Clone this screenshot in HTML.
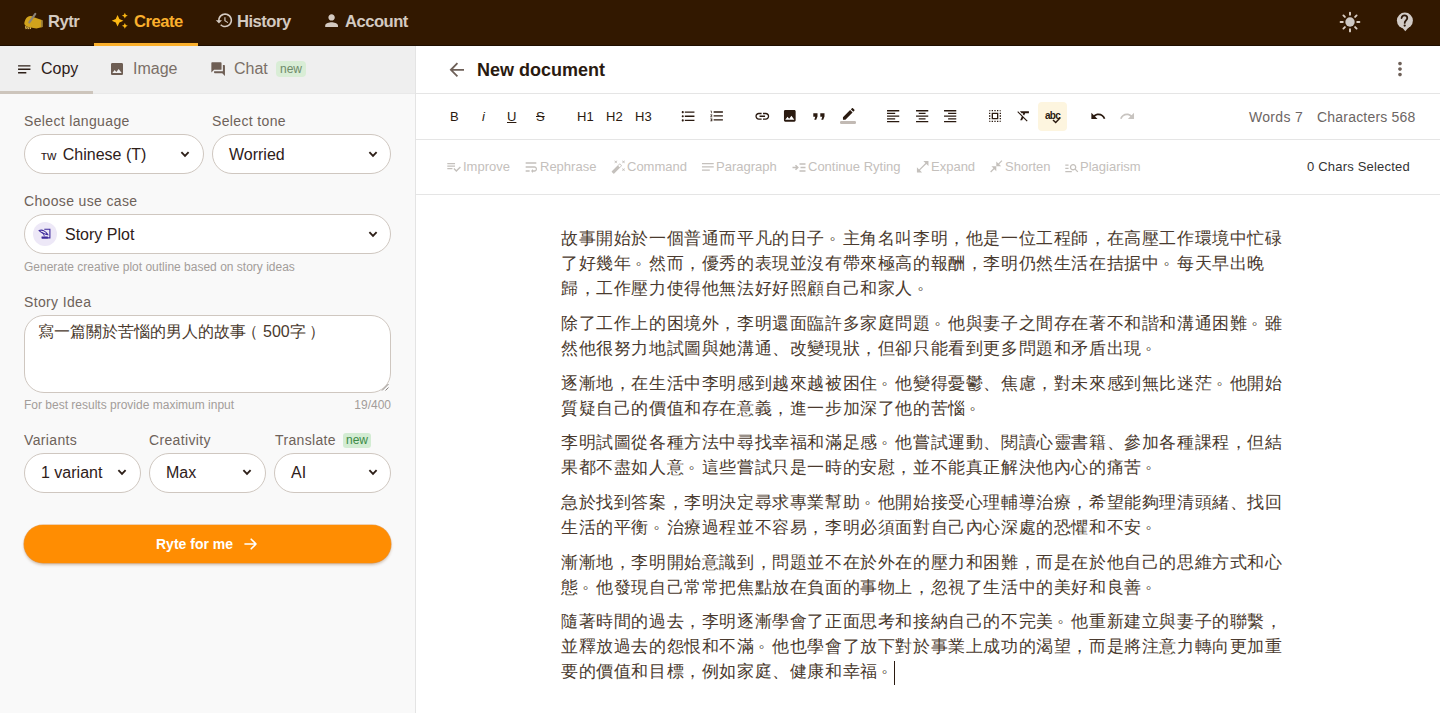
<!DOCTYPE html>
<html><head><meta charset="utf-8">
<style>
*{box-sizing:border-box;margin:0;padding:0}
html,body{width:1440px;height:713px;overflow:hidden;background:#fff;font-family:"Liberation Sans",sans-serif}
.a{position:absolute;white-space:nowrap}
svg{position:absolute;display:block;overflow:visible}
.nt{font-weight:bold;font-size:16.6px;letter-spacing:-0.5px;color:#d4cac1;line-height:16px}
.lbl{font-size:14px;color:#6e625a;line-height:14px;letter-spacing:0.35px}
.sel{position:absolute;height:40px;border:1px solid #cfc7c0;border-radius:20px;background:#fff}
.st{font-size:16px;color:#2e2019;line-height:16px}
.help{font-size:12px;color:#a39d99;line-height:12px}
.hl{position:absolute;left:416px;width:1024px;height:1px;background:#e5e5e5}
.tb{font-size:13px;color:#2a1a10;line-height:13px}
.ai{font-size:13px;color:#c4c0bc;line-height:13px}
#doc{position:absolute;left:561px;top:226.3px;font-size:17px;letter-spacing:0.6px;color:#4a3a2e;line-height:25px;white-space:nowrap}
#doc p{margin-bottom:9.7px}
#doc i{font-style:normal;position:relative;left:3.5px;top:-5px}
</style></head><body>
<!-- NAV -->
<div class="a" style="left:0;top:0;width:1440px;height:46px;background:#321800;border-bottom:1px solid #1f0e00"></div>
<svg style="left:24px;top:12px" width="20" height="18" viewBox="0 0 20 18">
  <path d="M0.3 11.3 C0.8 8.5 1.8 6 3.5 5 C5 4 6.5 3.8 8 4.3 L10.6 5.6 L17.9 7.9 L18.6 8.4 L18.6 15 L12.4 16.4 L8 15.7 L2.5 14.5 C1.2 13.6 0.4 12.6 0.3 11.3Z" fill="#d2a31c"/>
  <path d="M1.5 14.2 L2.3 17 M3.8 14.8 L4.4 17.1 M6 15.3 L6.5 17" stroke="#e3c15e" stroke-width="1.3"/>
  <path d="M17.2 8 L18.6 8.4 L18.6 15 L17.2 15.3Z" fill="#8f7a44"/>
  <path d="M5.3 10.4 L11.3 1.8" stroke="#8a8278" stroke-width="2.1" stroke-linecap="round"/>
</svg>
<div class="a nt" style="left:48px;top:14px">Rytr</div>
<svg style="left:111px;top:12px" width="17.5" height="17.5" viewBox="0 0 24 24"><path fill="#fdb813" d="M19 9l1.25-2.75L23 5l-2.75-1.25L19 1l-1.25 2.75L15 5l2.75 1.25L19 9zm-7.5.5L9 4 6.5 9.5 1 12l5.5 2.5L9 20l2.5-5.5L17 12l-5.5-2.5zM19 15l-1.25 2.75L15 19l2.75 1.25L19 23l1.25-2.75L23 19l-2.75-1.25L19 15z"/></svg>
<div class="a nt" style="left:134px;top:14px;color:#fbb02c">Create</div>
<div class="a" style="left:94px;top:43px;width:104px;height:3px;background:#fbb02c"></div>
<svg style="left:214.5px;top:10.8px" width="18.7" height="18.7" viewBox="0 0 24 24"><path fill="#d4cac1" d="M13 3c-4.97 0-9 4.03-9 9H1l3.89 3.89.07.14L9 12H6c0-3.87 3.13-7 7-7s7 3.13 7 7-3.13 7-7 7c-1.93 0-3.68-.79-4.94-2.06l-1.42 1.42C8.27 19.99 10.51 21 13 21c4.97 0 9-4.03 9-9s-4.03-9-9-9zm-1 5v5l4.28 2.54.72-1.21-3.5-2.08V8H12z"/></svg>
<div class="a nt" style="left:237px;top:14px">History</div>
<svg style="left:321.8px;top:11.1px" width="19.2" height="19.2" viewBox="0 0 24 24"><path fill="#d4cac1" d="M12 12c2.21 0 4-1.79 4-4s-1.79-4-4-4-4 1.79-4 4 1.79 4 4 4zm0 2c-2.67 0-8 1.34-8 4v2h16v-2c0-2.66-5.33-4-8-4z"/></svg>
<div class="a nt" style="left:345px;top:14px">Account</div>
<svg style="left:1338px;top:10px" width="24" height="24" viewBox="0 0 24 24">
  <circle cx="12" cy="12" r="4.7" fill="#cfc9c4"/>
  <g stroke="#dccfc4" stroke-width="1.9" stroke-linecap="round">
    <path d="M12 2.6v2.2M12 19.2v2.2M2.6 12h2.2M19.2 12h2.2M5.4 5.4l1.5 1.5M17.1 17.1l1.5 1.5M5.4 18.6l1.5-1.5M17.1 6.9l1.5-1.5"/>
  </g>
</svg>
<svg style="left:1396px;top:12px" width="18" height="20" viewBox="0 0 18 20">
  <circle cx="8.9" cy="8.6" r="8" fill="#d2cbc6"/>
  <path d="M6 15.3L14.6 13.2L9.3 19.3Z" fill="#d2cbc6"/>
  <path d="M5.6 6C5.8 4.2 7 3.3 8.5 3.3C10.2 3.3 11.3 4.5 11.3 6.1C11.3 8.2 8.7 8.6 8.7 10.9" stroke="#2a1608" stroke-width="1.8" fill="none" stroke-linecap="round"/>
  <circle cx="8.7" cy="13.6" r="1.15" fill="#2a1608"/>
</svg>

<!-- LEFT PANEL -->
<div class="a" style="left:0;top:46px;width:416px;height:667px;background:#f9f9f9;border-right:1px solid #e4e4e4"></div>
<div class="a" style="left:0;top:46px;width:415px;height:48px;background:#efefef;border-bottom:1px solid #e9e9e9"></div>
<div class="a" style="left:0;top:91px;width:93px;height:3px;background:#cdc5bc"></div>
<svg style="left:15.9px;top:60.8px" width="16.5" height="16.5" viewBox="0 0 24 24"><path fill="#2e2019" d="M3 18h12v-2H3v2zM3 6v2h18V6H3zm0 7h18v-2H3v2z"/></svg>
<div class="a" style="left:41px;top:61px;font-size:16px;color:#2e2019;line-height:16px">Copy</div>
<svg style="left:109px;top:60.7px" width="16" height="16" viewBox="0 0 24 24"><path fill="#6e5e54" d="M21 19V5c0-1.1-.9-2-2-2H5c-1.1 0-2 .9-2 2v14c0 1.1.9 2 2 2h14c1.1 0 2-.9 2-2zM8.5 13.5l2.5 3.01L14.5 12l4.5 6H5l3.5-4.5z"/></svg>
<div class="a" style="left:133px;top:61px;font-size:16px;color:#7b6f67;line-height:16px">Image</div>
<svg style="left:209.6px;top:60.8px" width="16.3" height="16.3" viewBox="0 0 24 24"><path fill="#6e5e54" d="M21 6h-2v9H6v2c0 .55.45 1 1 1h11l4 4V7c0-.55-.45-1-1-1zm-4 6V3c0-.55-.45-1-1-1H3c-.55 0-1 .45-1 1v14l4-4h10c.55 0 1-.45 1-1z"/></svg>
<div class="a" style="left:234px;top:61px;font-size:16px;color:#7b6f67;line-height:16px">Chat</div>
<div class="a" style="left:276px;top:61px;width:30px;height:16px;border-radius:4px;background:#d9edd6;font-size:12px;line-height:16px;color:#6f8a6a;text-align:center">new</div>

<div class="a lbl" style="left:24px;top:114px">Select language</div>
<div class="a lbl" style="left:212px;top:114px">Select tone</div>
<div class="sel" style="left:24px;top:134px;width:180px"></div>
<div class="sel" style="left:212px;top:134px;width:179px"></div>
<div class="a st" style="left:41px;top:147px"><span style="font-size:13px;margin-right:2px">ᴛw</span> Chinese (T)</div>
<div class="a st" style="left:229px;top:147px">Worried</div>

<div class="a lbl" style="left:24px;top:194px">Choose use case</div>
<div class="sel" style="left:24px;top:214px;width:367px"></div>
<div class="a" style="left:33px;top:222px;width:24px;height:24px;border-radius:12px;background:#ede8f7"></div>
<svg style="left:38px;top:228px" width="13" height="12" viewBox="0 0 13 12">
  <path d="M6.3 1.3H11.9V9.9H4" stroke="#3e2a9c" stroke-width="1.1" fill="none"/>
  <path d="M1.2 2.6C4.2 1.2 8.2 3.4 9.7 6.6C6.4 5.9 3.2 4.8 1.2 2.6Z" stroke="#3e2a9c" stroke-width="1.1" fill="none"/>
  <path d="M4.5 4.3L6.5 8.3" stroke="#3e2a9c" stroke-width="0.8"/>
  <rect x="3.5" y="8.4" width="6.4" height="2.2" rx="0.4" fill="#3e2a9c"/>
</svg>
<div class="a st" style="left:65px;top:227px">Story Plot</div>
<div class="a help" style="left:24px;top:261px">Generate creative plot outline based on story ideas</div>

<div class="a lbl" style="left:24px;top:295px">Story Idea</div>
<div class="a" style="left:24px;top:315px;width:367px;height:78px;border:1px solid #cfc7c0;border-radius:20px;background:#fff"></div>
<div class="a" style="left:38px;top:322px;font-size:16px;line-height:20px;color:#4a3a2e">寫一篇關於苦惱的男人的故事<span style="display:inline-block;width:17px;text-align:left"><span style="position:relative;left:-4px">（</span></span>500字<span style="display:inline-block;width:22px;text-align:center">）</span></div>
<svg style="left:381px;top:383px" width="8" height="8" viewBox="0 0 8 8"><path d="M1 7.5L7.5 1M4.5 7.5L7.5 4.5" stroke="#8a8480" stroke-width="1"/></svg>
<div class="a help" style="left:24px;top:399px">For best results provide maximum input</div>
<div class="a help" style="left:291px;top:399px;width:100px;text-align:right">19/400</div>

<div class="a lbl" style="left:24px;top:433px">Variants</div>
<div class="a lbl" style="left:149px;top:433px">Creativity</div>
<div class="a lbl" style="left:275px;top:433px">Translate</div>
<div class="a" style="left:343px;top:433px;width:28px;height:15px;border-radius:3px;background:#d3ecd3;font-size:12px;line-height:15px;color:#3c8a46;text-align:center">new</div>
<div class="sel" style="left:24px;top:453px;width:117px"></div>
<div class="sel" style="left:149px;top:453px;width:117px"></div>
<div class="sel" style="left:274px;top:453px;width:117px"></div>
<div class="a st" style="left:41px;top:465px">1 variant</div>
<div class="a st" style="left:166px;top:465px">Max</div>
<div class="a st" style="left:291px;top:465px">AI</div>

<!-- chevrons -->
<svg style="left:175.5px;top:144.5px" width="18" height="18" viewBox="0 0 24 24"><path d="M7.2 9.6L12 14.4l4.8-4.8" stroke="#2e2019" stroke-width="2.5" fill="none"/></svg>
<svg style="left:363.5px;top:144.5px" width="18" height="18" viewBox="0 0 24 24"><path d="M7.2 9.6L12 14.4l4.8-4.8" stroke="#2e2019" stroke-width="2.5" fill="none"/></svg>
<svg style="left:364px;top:224.5px" width="18" height="18" viewBox="0 0 24 24"><path d="M7.2 9.6L12 14.4l4.8-4.8" stroke="#2e2019" stroke-width="2.5" fill="none"/></svg>
<svg style="left:113px;top:463px" width="18" height="18" viewBox="0 0 24 24"><path d="M7.2 9.6L12 14.4l4.8-4.8" stroke="#2e2019" stroke-width="2.5" fill="none"/></svg>
<svg style="left:238px;top:463px" width="18" height="18" viewBox="0 0 24 24"><path d="M7.2 9.6L12 14.4l4.8-4.8" stroke="#2e2019" stroke-width="2.5" fill="none"/></svg>
<svg style="left:363.5px;top:463px" width="18" height="18" viewBox="0 0 24 24"><path d="M7.2 9.6L12 14.4l4.8-4.8" stroke="#2e2019" stroke-width="2.5" fill="none"/></svg>

<div class="a" style="left:24px;top:525px;width:367px;height:38px;border-radius:19px;background:#ff8d02;box-shadow:0 0 0 0.6px rgba(220,120,20,.6),0 2px 3px rgba(120,60,0,.3)"></div>
<div class="a" style="left:156px;top:537px;font-size:14px;line-height:14px;font-weight:bold;color:#fff">Ryte for me</div>
<svg style="left:244px;top:538px" width="14" height="12" viewBox="0 0 14 12"><path d="M1 6h11M7.2 1.2L12 6l-4.8 4.8" stroke="#fff" stroke-width="1.6" fill="none" stroke-linecap="round" stroke-linejoin="round"/></svg>

<!-- RIGHT -->
<div class="hl" style="top:93px"></div>
<div class="hl" style="top:139px"></div>
<div class="hl" style="top:194px"></div>
<svg style="left:445.7px;top:58.6px" width="21.6" height="21.6" viewBox="0 0 24 24"><path fill="#6e6058" d="M20 11H7.83l5.59-5.59L12 4l-8 8 8 8 1.41-1.41L7.83 13H20v-2z"/></svg>
<div class="a" style="left:477px;top:61px;font-size:18px;line-height:18px;font-weight:bold;color:#2a1a10">New document</div>
<svg style="left:1388.8px;top:58.3px" width="22" height="22" viewBox="0 0 24 24"><path fill="#6e6058" d="M12 8c1.1 0 2-.9 2-2s-.9-2-2-2-2 .9-2 2 .9 2 2 2zm0 2c-1.1 0-2 .9-2 2s.9 2 2 2 2-.9 2-2-.9-2-2-2zm0 6c-1.1 0-2 .9-2 2s.9 2 2 2 2-.9 2-2-.9-2-2-2z"/></svg>

<div class="a tb" style="left:450px;top:110px">B</div>
<div class="a tb" style="left:482px;top:110px;font-style:italic">i</div>
<div class="a tb" style="left:507px;top:110px;text-decoration:underline">U</div>
<div class="a tb" style="left:536px;top:110px;text-decoration:line-through">S</div>
<div class="a tb" style="left:577px;top:110px">H1</div>
<div class="a tb" style="left:606px;top:110px">H2</div>
<div class="a tb" style="left:635px;top:110px">H3</div>
<svg style="left:679.8px;top:107.7px" width="16.5" height="16.5" viewBox="0 0 24 24"><path fill="#2a1a10" d="M4 10.5c-.83 0-1.5.67-1.5 1.5s.67 1.5 1.5 1.5 1.5-.67 1.5-1.5-.67-1.5-1.5-1.5zm0-6c-.83 0-1.5.67-1.5 1.5S3.17 7.5 4 7.5 5.5 6.83 5.5 6 4.83 4.5 4 4.5zm0 12c-.83 0-1.5.68-1.5 1.5s.68 1.5 1.5 1.5 1.5-.68 1.5-1.5-.67-1.5-1.5-1.5zM7 19h14v-2H7v2zm0-6h14v-2H7v2zm0-8v2h14V5H7z"/></svg>
<svg style="left:709.1px;top:107.9px" width="15.9" height="15.9" viewBox="0 0 24 24"><path fill="#2a1a10" d="M2 17h2v.5H3v1h1v.5H2v1h3v-4H2v1zm1-9h1V4H2v1h1v3zm-1 3h1.8L2 13.1v.9h3v-1H3.2L5 10.9V10H2v1zm5-6v2h14V5H7zm0 14h14v-2H7v2zm0-6h14v-2H7v2z"/></svg>
<svg style="left:753.6px;top:107.7px" width="16.6" height="16.6" viewBox="0 0 24 24"><path fill="#2a1a10" d="M3.9 12c0-1.71 1.39-3.1 3.1-3.1h4V7H7c-2.76 0-5 2.24-5 5s2.24 5 5 5h4v-1.9H7c-1.71 0-3.1-1.39-3.1-3.1zM8 13h8v-2H8v2zm9-6h-4v1.9h4c1.71 0 3.1 1.39 3.1 3.1s-1.39 3.1-3.1 3.1h-4V17h4c2.76 0 5-2.24 5-5s-2.24-5-5-5z"/></svg>
<svg style="left:782px;top:108.3px" width="15.6" height="15.6" viewBox="0 0 24 24"><path fill="#2a1a10" d="M21 19V5c0-1.1-.9-2-2-2H5c-1.1 0-2 .9-2 2v14c0 1.1.9 2 2 2h14c1.1 0 2-.9 2-2zM8.5 13.5l2.5 3.01L14.5 12l4.5 6H5l3.5-4.5z"/></svg>
<svg style="left:813px;top:112.5px" width="12.5" height="7" viewBox="0 0 12.5 7"><path fill="#2a1a10" d="M0.3 0.3h4.2v3.2L3.2 6.7H1.3l1-3H0.3zM7.3 0.3h4.2v3.2L10.2 6.7H8.3l1-3H7.3z"/></svg>
<svg style="left:840.5px;top:105.9px" width="15.6" height="15.6" viewBox="0 0 24 24"><path fill="#2a1a10" d="M3 17.25V21h3.75L17.81 9.94l-3.75-3.75L3 17.25zM20.71 7.04c.39-.39.39-1.02 0-1.41l-2.34-2.34c-.39-.39-1.02-.39-1.41 0l-1.83 1.83 3.75 3.75 1.83-1.83z"/></svg>
<div class="a" style="left:840px;top:121px;width:16px;height:2.6px;border-radius:1.3px;background:#c2bab4"></div>
<svg style="left:884.9px;top:107.6px" width="16.3" height="16.3" viewBox="0 0 24 24"><path fill="#2a1a10" d="M15 15H3v2h12v-2zm0-8H3v2h12V7zM3 13h18v-2H3v2zm0 8h18v-2H3v2zM3 3v2h18V3H3z"/></svg>
<svg style="left:914px;top:107.6px" width="16.3" height="16.3" viewBox="0 0 24 24"><path fill="#2a1a10" d="M7 15v2h10v-2H7zm-4 6h18v-2H3v2zm0-8h18v-2H3v2zm4-6v2h10V7H7zM3 3v2h18V3H3z"/></svg>
<svg style="left:942.2px;top:107.6px" width="16.3" height="16.3" viewBox="0 0 24 24"><path fill="#2a1a10" d="M3 21h18v-2H3v2zm6-4h12v-2H9v2zm-6-4h18v-2H3v2zm6-4h12V7H9v2zM3 3v2h18V3H3z"/></svg>
<svg style="left:987px;top:107.6px" width="16" height="16" viewBox="0 0 24 24"><path fill="#2a1a10" d="M3 5h2V3c-1.1 0-2 .9-2 2zm0 8h2v-2H3v2zm4 8h2v-2H7v2zM3 9h2V7H3v2zm10-6h-2v2h2V3zm6 0v2h2c0-1.1-.9-2-2-2zM5 21v-2H3c0 1.1.9 2 2 2zm-2-4h2v-2H3v2zM9 3H7v2h2V3zm2 18h2v-2h-2v2zm8-8h2v-2h-2v2zm0 8c1.1 0 2-.9 2-2h-2v2zm0-12h2V7h-2v2zm0 8h2v-2h-2v2zm-4 4h2v-2h-2v2zm0-16h2V3h-2v2zM7 17h10V7H7v10zm2-8h6v6H9V9z"/></svg>
<svg style="left:1016.1px;top:107.8px" width="15.5" height="15.5" viewBox="0 0 24 24"><path fill="#2a1a10" d="M3.27 5L2 6.27l6.97 6.97L6.5 19h3l1.57-3.66L16.73 21 18 19.73 3.55 5.27 3.27 5zM6 5v.18L8.82 8h2.4l-.72 1.68 2.1 2.1L14.21 8H20V5H6z"/></svg>
<div class="a" style="left:1038px;top:102px;width:29px;height:29px;border-radius:4px;background:#fdf5df"></div>
<div class="a" style="left:1045px;top:111px;font-size:10px;line-height:10px;font-weight:bold;color:#2a1a10;letter-spacing:-0.7px">abc</div>
<svg style="left:1051.5px;top:117.3px" width="9" height="6" viewBox="0 0 9 6"><path d="M1 3l2.7 2.5L8.2 0.8" stroke="#2a1a10" stroke-width="1.5" fill="none"/></svg>
<svg style="left:1089.6px;top:107.7px" width="16.4" height="16.4" viewBox="0 0 24 24"><path fill="#2a1a10" d="M12.5 8c-2.65 0-5.05.99-6.9 2.6L2 7v9h9l-3.62-3.62c1.39-1.16 3.16-1.88 5.12-1.88 3.54 0 6.55 2.31 7.6 5.5l2.37-.78C21.08 11.03 17.15 8 12.5 8z"/></svg>
<svg style="left:1118.5px;top:107.7px" width="16.4" height="16.4" viewBox="0 0 24 24"><path fill="#c8c4c0" d="M18.4 10.6C16.55 8.99 14.15 8 11.5 8c-4.65 0-8.58 3.03-9.96 7.22L3.9 16c1.05-3.19 4.05-5.5 7.6-5.5 1.95 0 3.73.72 5.12 1.88L13 16h9V7l-3.6 3.6z"/></svg>
<div class="a" style="left:1249px;top:110px;font-size:14px;line-height:14px;letter-spacing:0.3px;color:#6c6664">Words 7</div>
<div class="a" style="left:1317px;top:110px;font-size:14px;line-height:14px;letter-spacing:0.2px;color:#6c6664">Characters 568</div>

<svg style="left:446px;top:158.8px" width="15.5" height="15.5" viewBox="0 0 24 24"><path fill="#c4c0bc" d="M14 10H2v2h12v-2zm0-4H2v2h12V6zM2 16h8v-2H2v2zm19.5-4.5L23 13l-6.99 7-4.51-4.5L13 14l3.01 3 5.49-5.5z"/></svg>
<div class="a ai" style="left:463px;top:160px">Improve</div>
<svg style="left:522.8px;top:159px" width="16" height="16" viewBox="0 0 24 24"><path fill="#c4c0bc" d="M4 19h6v-2H4v2zM20 5H4v2h16V5zm-3 6H4v2h13.25c1.1 0 2 .9 2 2s-.9 2-2 2H15v-2l-3 3 3 3v-2h2c2.21 0 4-1.79 4-4s-1.79-4-4-4z"/></svg>
<div class="a ai" style="left:540px;top:160px">Rephrase</div>
<svg style="left:610.9px;top:159px" width="15.4" height="15.4" viewBox="0 0 24 24"><path fill="#c4c0bc" d="M7.5 5.6L10 7 8.6 4.5 10 2 7.5 3.4 5 2l1.4 2.5L5 7zm12 9.8L17 14l1.4 2.5L17 19l2.5-1.4L22 19l-1.4-2.5L22 14zM22 2l-2.5 1.4L17 2l1.4 2.5L17 7l2.5-1.4L22 7l-1.4-2.5zm-7.63 5.29c-.39-.39-1.02-.39-1.41 0L1.29 18.96c-.39.39-.39 1.02 0 1.41l2.34 2.34c.39.39 1.02.39 1.41 0L16.7 11.05c.39-.39.39-1.02 0-1.41l-2.33-2.35zm-1.03 5.49l-2.12-2.12 2.44-2.44 2.12 2.12-2.44 2.44z"/></svg>
<div class="a ai" style="left:627px;top:160px">Command</div>
<svg style="left:699.7px;top:159.1px" width="15.7" height="15.7" viewBox="0 0 24 24"><path fill="#c4c0bc" d="M3 18h12v-2H3v2zM3 6v2h18V6H3zm0 7h18v-2H3v2z"/></svg>
<div class="a ai" style="left:716px;top:160px">Paragraph</div>
<svg style="left:792px;top:162.5px" width="14" height="9" viewBox="0 0 14 9"><path d="M0.5 4.5h5M3.5 2.2l2.3 2.3-2.3 2.3" stroke="#c4c0bc" stroke-width="1.5" fill="none"/><path d="M7.5 1h6M8.5 4.5h5M7.5 8h6" stroke="#c4c0bc" stroke-width="1.5"/></svg>
<div class="a ai" style="left:808px;top:160px">Continue Ryting</div>
<svg style="left:915.3px;top:159px" width="15.4" height="15.4" viewBox="0 0 24 24"><path fill="#c4c0bc" d="M21 11V3h-8l3.29 3.29-10 10L3 13v8h8l-3.29-3.29 10-10z"/></svg>
<div class="a ai" style="left:931px;top:160px">Expand</div>
<svg style="left:989.4px;top:159.1px" width="14.6" height="14.6" viewBox="0 0 24 24"><path fill="#c4c0bc" d="M22 3.41L16.71 8.7 20 12h-8V4l3.29 3.29L20.59 2 22 3.41zM3.41 22l5.29-5.29L12 20v-8H4l3.29 3.29L2 20.59 3.41 22z"/></svg>
<div class="a ai" style="left:1005px;top:160px">Shorten</div>
<svg style="left:1063.7px;top:159.7px" width="15.6" height="15.6" viewBox="0 0 24 24"><path fill="#c4c0bc" d="M7 9H2V7h5v2zm0 3H2v2h5v-2zm13.59 7l-3.83-3.83c-.8.52-1.74.83-2.76.83-2.76 0-5-2.24-5-5s2.24-5 5-5 5 2.24 5 5c0 1.02-.31 1.96-.83 2.75L22 17.59 20.59 19zM17 11c0-1.65-1.35-3-3-3s-3 1.35-3 3 1.35 3 3 3 3-1.35 3-3zM2 19h10v-2H2v2z"/></svg>
<div class="a ai" style="left:1080px;top:160px">Plagiarism</div>
<div class="a" style="left:1307px;top:160px;font-size:13px;line-height:13px;letter-spacing:0.2px;color:#333">0 Chars Selected</div>

<div id="doc">
<p>故事開始於一個普通而平凡的日子<i>。</i>主角名叫李明，他是一位工程師，在高壓工作環境中忙碌<br>了好幾年<i>。</i>然而，優秀的表現並沒有帶來極高的報酬，李明仍然生活在拮据中<i>。</i>每天早出晚<br>歸，工作壓力使得他無法好好照顧自己和家人<i>。</i></p>
<p>除了工作上的困境外，李明還面臨許多家庭問題<i>。</i>他與妻子之間存在著不和諧和溝通困難<i>。</i>雖<br>然他很努力地試圖與她溝通、改變現狀，但卻只能看到更多問題和矛盾出現<i>。</i></p>
<p>逐漸地，在生活中李明感到越來越被困住<i>。</i>他變得憂鬱、焦慮，對未來感到無比迷茫<i>。</i>他開始<br>質疑自己的價值和存在意義，進一步加深了他的苦惱<i>。</i></p>
<p>李明試圖從各種方法中尋找幸福和滿足感<i>。</i>他嘗試運動、閱讀心靈書籍、參加各種課程，但結<br>果都不盡如人意<i>。</i>這些嘗試只是一時的安慰，並不能真正解決他內心的痛苦<i>。</i></p>
<p>急於找到答案，李明決定尋求專業幫助<i>。</i>他開始接受心理輔導治療，希望能夠理清頭緒、找回<br>生活的平衡<i>。</i>治療過程並不容易，李明必須面對自己內心深處的恐懼和不安<i>。</i></p>
<p>漸漸地，李明開始意識到，問題並不在於外在的壓力和困難，而是在於他自己的思維方式和心<br>態<i>。</i>他發現自己常常把焦點放在負面的事物上，忽視了生活中的美好和良善<i>。</i></p>
<p>隨著時間的過去，李明逐漸學會了正面思考和接納自己的不完美<i>。</i>他重新建立與妻子的聯繫，<br>並釋放過去的怨恨和不滿<i>。</i>他也學會了放下對於事業上成功的渴望，而是將注意力轉向更加重<br>要的價值和目標，例如家庭、健康和幸福<i>。</i><span style="display:inline-block;width:1px;height:24px;background:#2a1a10;vertical-align:-8px;margin-left:-1px"></span></p>
</div>
</body></html>
